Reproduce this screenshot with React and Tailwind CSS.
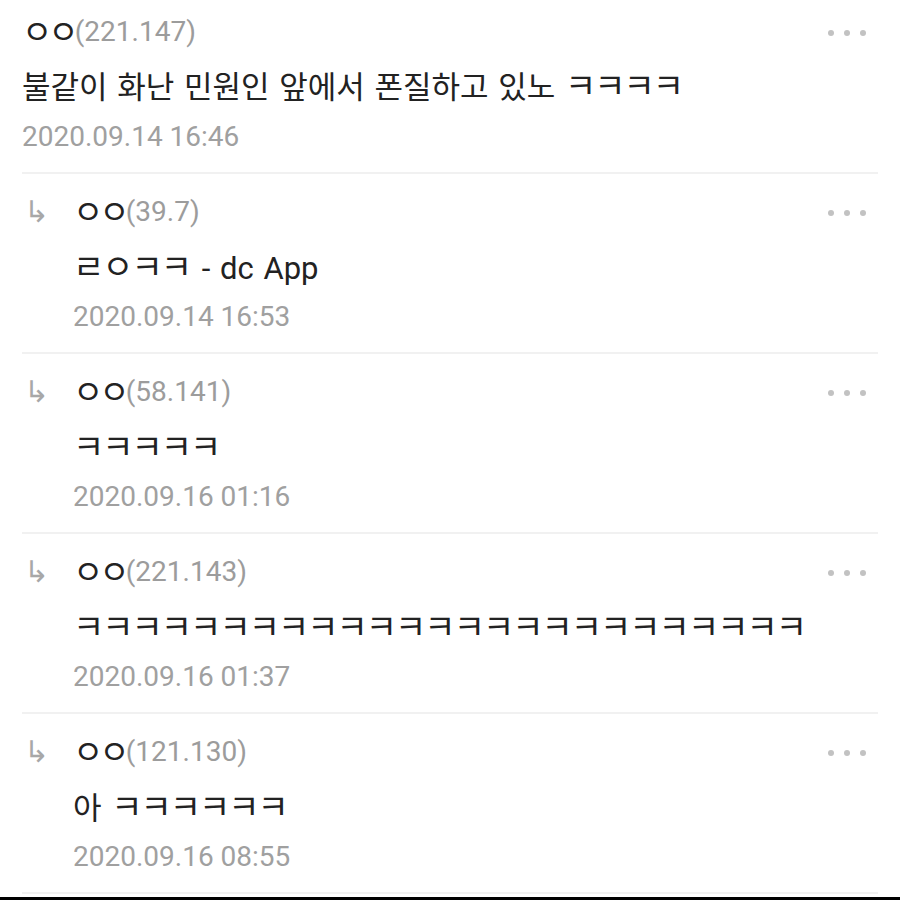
const comments = [
  { ip: '221.147', body: '불같이 화난 민원인 앞에서 폰질하고 있노 ㅋㅋㅋㅋ', date: '2020.09.14 16:46' },
  { ip: '39.7', body: 'ㄹㅇㅋㅋ - dc App', date: '2020.09.14 16:53', reply: true },
  { ip: '58.141', body: 'ㅋㅋㅋㅋㅋ', date: '2020.09.16 01:16', reply: true },
  { ip: '221.143', body: 'ㅋㅋㅋㅋㅋㅋㅋㅋㅋㅋㅋㅋㅋㅋㅋㅋㅋㅋㅋㅋㅋㅋㅋㅋㅋ', date: '2020.09.16 01:37', reply: true },
  { ip: '121.130', body: '아 ㅋㅋㅋㅋㅋㅋ', date: '2020.09.16 08:55', reply: true },
]

// compatibility jamo render tiny in Noto CJK, so size them up a little
function Jamo({ text }) {
  const parts = text.split(/([\u3131-\u318E]+)/)
  return parts.map((p, i) =>
    /[\u3131-\u318E]/.test(p) ? (
      <span key={i} className="text-[34px] leading-none tracking-[-2px] mr-[2px]">
        {p}
      </span>
    ) : (
      p
    )
  )
}

function MoreDots() {
  return (
    <div className="flex items-center gap-[10px] pt-[1px]">
      <span className="w-[6px] h-[6px] rounded-full bg-[#c2c2c2]" />
      <span className="w-[6px] h-[6px] rounded-full bg-[#c2c2c2]" />
      <span className="w-[6px] h-[6px] rounded-full bg-[#c2c2c2]" />
    </div>
  )
}

function Comment({ c }) {
  return (
    <div className="flex border-b-2 border-[#f1f1f1]">
      {c.reply && (
        <div className="w-[51px] shrink-0 pt-[20px] leading-[36px] text-[30px] text-[#a8a8a8] pl-[2px]">
          ↳
        </div>
      )}
      <div className={`flex-1 ${c.reply ? 'pt-[20px]' : 'pt-[14px]'} pb-[17px]`}>
        <div className="flex items-center justify-between h-[36px] pr-[12px]">
          <div className="text-[28px] leading-[36px] flex items-center">
            <span className="text-[33px] leading-none tracking-[-4px] text-[#222]">ㅇㅇ</span>
            <span className="text-[#9c9c9c]">({c.ip})</span>
          </div>
          <MoreDots />
        </div>
        <div
          className={`${c.reply ? 'mt-[15px]' : 'mt-[14px]'} h-[48px] flex items-center text-[31px] text-[#222] whitespace-nowrap [word-spacing:2px]`}
        >
          <span className="leading-[40px]">
            <Jamo text={c.body} />
          </span>
        </div>
        <div className={`${c.reply ? 'mt-[6px]' : 'mt-[7px]'} text-[28px] leading-[36px] text-[#a0a0a0]`}>
          {c.date}
        </div>
      </div>
    </div>
  )
}

export default function App() {
  return (
    <div
      className="w-[900px] h-[900px] bg-white flex flex-col overflow-hidden"
      style={{ fontFamily: 'Roboto, "Noto Sans CJK KR", sans-serif' }}
    >
      <div className="flex-1 px-[22px]">
        {comments.map((c, i) => (
          <Comment key={i} c={c} />
        ))}
      </div>
      <div className="h-[3px] bg-black" />
    </div>
  )
}
